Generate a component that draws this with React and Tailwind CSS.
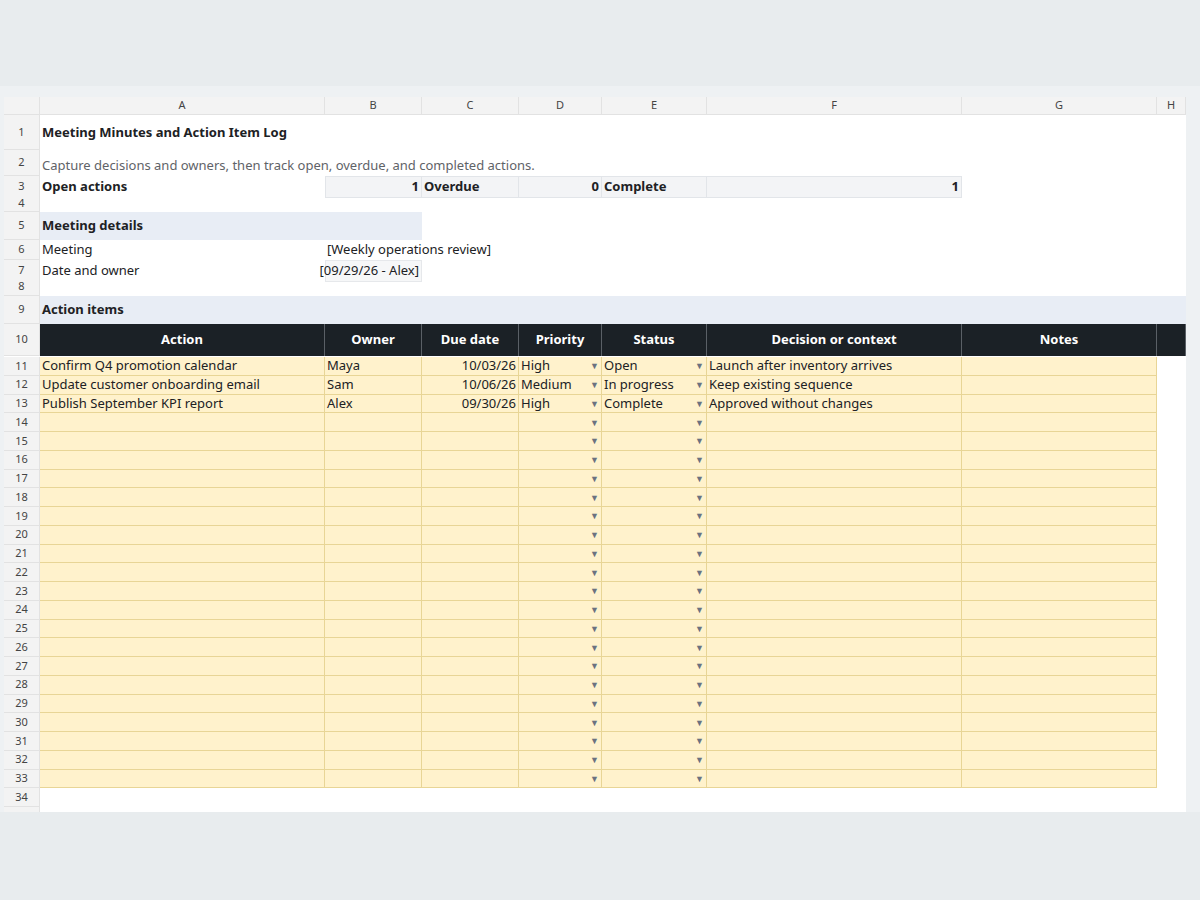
const cols = "grid grid-cols-[36px_285px_97px_97px_83px_105px_255px_195px_29px]";

function Row({ n, h, children }) {
  return (
    <div className={cols} style={{ height: h }}>
      <div className="bg-[#f3f3f3] border-b border-r border-[#e2e2e2] text-[11px] text-[#444] flex items-center justify-center overflow-hidden">
        {n}
      </div>
      {children}
    </div>
  );
}

const Arrow = () => <span className="text-[9px] text-[#6b7280] leading-none">▼</span>;

const items = [
  ["Confirm Q4 promotion calendar", "Maya", "10/03/26", "High", "Open", "Launch after inventory arrives"],
  ["Update customer onboarding email", "Sam", "10/06/26", "Medium", "In progress", "Keep existing sequence"],
  ["Publish September KPI report", "Alex", "09/30/26", "High", "Complete", "Approved without changes"],
];

export default function App() {
  const y = "bg-[#fff2cc] border-r border-b border-[#e8d596] px-[2px] flex items-center overflow-hidden whitespace-nowrap";
  const rows = [];
  for (let i = 0; i < 23; i++) {
    const d = items[i] || ["", "", "", "", "", ""];
    rows.push(
      <Row key={i} n={11 + i} h={18.75}>
        <div className={y}>{d[0]}</div>
        <div className={y}>{d[1]}</div>
        <div className={y + " justify-end"}>{d[2]}</div>
        <div className={y + " justify-between pr-[2px]"}>
          <span>{d[3]}</span>
          <Arrow />
        </div>
        <div className={y + " justify-between pr-[2px]"}>
          <span>{d[4]}</span>
          <Arrow />
        </div>
        <div className={y}>{d[5]}</div>
        <div className={y}></div>
        <div></div>
      </Row>
    );
  }
  const th = "bg-[#1b2126] text-white font-bold flex items-center justify-center border-r border-[#5a6066]";
  const sum = "bg-[#f3f4f6] border-y border-r border-[#e2e5e9] flex items-center justify-end px-[2px] font-bold whitespace-nowrap";
  return (
    <div className="w-[1200px] h-[900px] bg-[#e8ecee] font-['Liberation_Sans'] text-[13px] text-[#202124]">
      <div className="h-[86px]" />
      <div className="h-[726px] bg-[#eef1f3] pl-[4px] pt-[11px] overflow-hidden">
        <div className="w-[1182px] bg-white">
          <div className={cols + " h-[18px] text-[11px] text-[#444]"}>
            {["", "A", "B", "C", "D", "E", "F", "G", "H"].map((c, i) => (
              <div key={i} className="bg-[#f3f3f3] border-r border-b border-[#e2e2e2] flex items-center justify-center">
                {c}
              </div>
            ))}
          </div>
          <Row n={1} h={35}>
            <div className="col-span-8 flex items-center px-[2px] font-bold">Meeting Minutes and Action Item Log</div>
          </Row>
          <Row n={2} h={26}>
            <div className="col-span-8 flex items-end pb-[1px] px-[2px] text-[#5f6368]">
              Capture decisions and owners, then track open, overdue, and completed actions.
            </div>
          </Row>
          <Row n={3} h={19}>
            <div className="flex items-center px-[2px] font-bold">Open actions</div>
            <div className={sum + " border-l"}>1</div>
            <div className={sum + " justify-start"}>Overdue</div>
            <div className={sum}>0</div>
            <div className={sum + " justify-start"}>Complete</div>
            <div className={sum}>1</div>
          </Row>
          <Row n={4} h={17} />
          <Row n={5} h={28}>
            <div className="col-span-2 bg-[#e8edf5] flex items-center px-[2px] font-bold">Meeting details</div>
          </Row>
          <Row n={6} h={20}>
            <div className="flex items-center px-[2px]">Meeting</div>
            <div className="col-span-2 flex items-center px-[2px] whitespace-nowrap">[Weekly operations review]</div>
          </Row>
          <Row n={7} h={18}>
            <div className="flex items-center px-[2px]">Date and owner</div>
            <div className="bg-[#f6f7f8] border border-[#e6e8eb] flex items-center justify-end px-[2px] whitespace-nowrap">[09/29/26 - Alex]</div>
          </Row>
          <Row n={8} h={18} />
          <Row n={9} h={28}>
            <div className="col-span-8 bg-[#e8edf5] flex items-center px-[2px] font-bold">Action items</div>
          </Row>
          <Row n={10} h={32}>
            {["Action", "Owner", "Due date", "Priority", "Status", "Decision or context", "Notes", ""].map((c, i) => (
              <div key={i} className={th}>{c}</div>
            ))}
          </Row>
          <div className="h-[1px]" />
          {rows}
          <Row n={34} h={19} />
          <Row n={35} h={19} />
        </div>
      </div>
    </div>
  );
}
